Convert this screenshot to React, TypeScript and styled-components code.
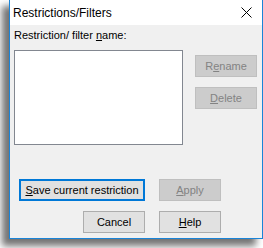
import styled, { createGlobalStyle } from "styled-components"

const GlobalStyle = createGlobalStyle`
  html, body {
    margin: 0;
    padding: 0;
    background: #fff;
    font-family: "Liberation Sans", Arial, sans-serif;
  }
`

const Page = styled.div`
  width: 263px;
  height: 248px;
  overflow: hidden;
  padding-left: 9px;
  box-sizing: border-box;
`

const Window = styled.div`
  width: 254px;
  margin-top: -1px;
  border: 1px solid #1a84d8;
  box-sizing: border-box;
  box-shadow: -7px 7px 7px rgba(0, 0, 0, 0.55);
  display: flex;
  flex-direction: column;
`

const TitleBar = styled.div`
  height: 25px;
  background: #fff;
  display: flex;
  align-items: center;
  justify-content: space-between;
  padding: 0 10px 0 3px;
  font-size: 12px;
  color: #000;
`

const Body = styled.div`
  height: 213px;
  background: #f0f0f0;
  padding-top: 4px;
  box-sizing: border-box;
  font-size: 11px;
  color: #000;
`

const Label = styled.div`
  line-height: 13px;
  margin-left: 4px;
`

const Row = styled.div<{ $top: number; $left: number }>`
  display: flex;
  align-items: flex-start;
  margin-top: ${(p) => p.$top}px;
  padding-left: ${(p) => p.$left}px;
  gap: 14px;
`

const ListBox = styled.div`
  width: 169px;
  height: 95px;
  background: #fff;
  border: 1px solid #828790;
  box-sizing: border-box;
`

const SideButtons = styled.div`
  display: flex;
  flex-direction: column;
  gap: 10px;
  margin-top: 5px;
  margin-left: -2px;
`

const Button = styled.button<{ $width?: number; $default?: boolean }>`
  width: ${(p) => p.$width ?? 62}px;
  height: 22px;
  padding: 0;
  box-sizing: border-box;
  font-family: inherit;
  font-size: 11px;
  font-weight: normal;
  color: #000;
  background: #e1e1e1;
  border: 1px solid #adadad;
  border-radius: 0;
  ${(p) => p.$default && "border: 2px solid #0078d7;"}

  &:disabled {
    background: #cccccc;
    border-color: #bfbfbf;
    color: #838383;
  }

  u {
    text-decoration-thickness: 1px;
  }
`

const CloseIcon = () => (
  <svg width="11" height="11" viewBox="0 0 11 11">
    <path d="M0.5 0.5 L10.5 10.5 M10.5 0.5 L0.5 10.5" stroke="#000" strokeWidth="1" />
  </svg>
)

export default function App() {
  return (
    <Page>
      <GlobalStyle />
      <Window>
        <TitleBar>
          <span>Restrictions/Filters</span>
          <CloseIcon />
        </TitleBar>
        <Body>
          <Label>
            Restriction/ filter <u>n</u>ame:
          </Label>
          <Row $top={8} $left={4}>
            <ListBox />
            <SideButtons>
              <Button disabled>
                R<u>e</u>name
              </Button>
              <Button disabled>
                <u>D</u>elete
              </Button>
            </SideButtons>
          </Row>
          <Row $top={34} $left={9}>
            <Button $width={126} $default>
              <u>S</u>ave current restriction
            </Button>
            <Button disabled>
              <u>A</u>pply
            </Button>
          </Row>
          <Row $top={10} $left={73}>
            <Button>Cancel</Button>
            <Button>
              <u>H</u>elp
            </Button>
          </Row>
        </Body>
      </Window>
    </Page>
  )
}
